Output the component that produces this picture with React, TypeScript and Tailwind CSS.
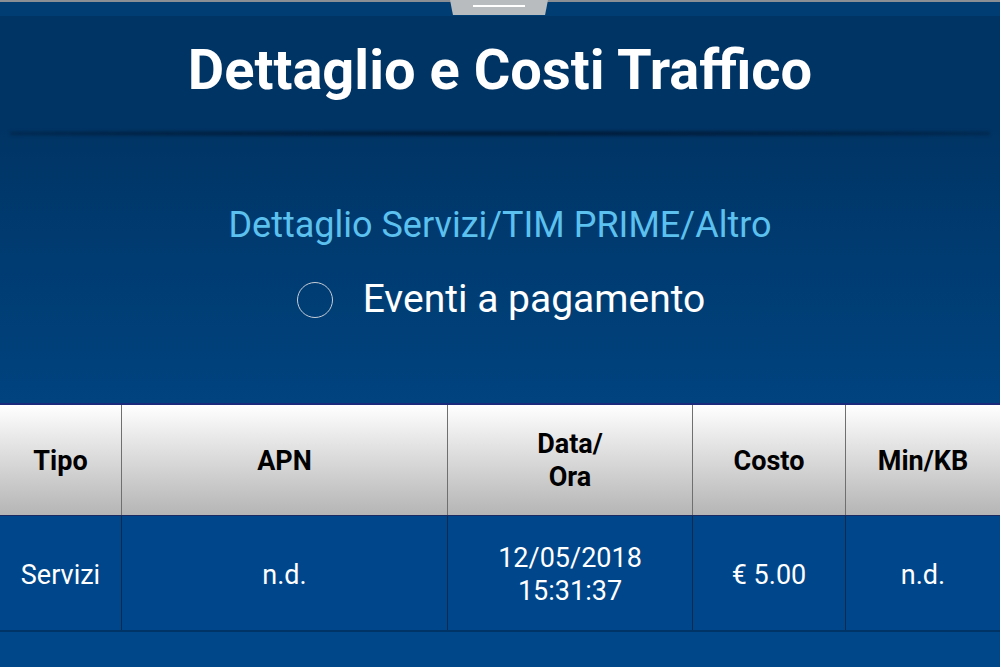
import React from "react";

export default function App() {
  const cols = ["w-[122px]", "w-[326px]", "w-[245px]", "w-[153px]", "flex-1"];
  return (
    <div className="w-[1000px] h-[667px] overflow-hidden bg-[#00478a] flex flex-col" style={{ fontFamily: "Roboto, 'Liberation Sans', sans-serif" }}>
      {/* top strip */}
      <div className="relative h-[16px] bg-[#003d72] border-t-2 border-[#8a8f96] shrink-0">
        <div className="absolute left-[450px] top-[-2px] w-[98px] h-[15px] bg-[#b9bcbf] [clip-path:polygon(0_0,100%_0,97%_100%,3%_100%)] flex justify-center pt-[5px] shadow-[0_2px_3px_rgba(0,0,0,0.6)]">
          <div className="w-[52px] h-[2px] bg-white" />
        </div>
      </div>
      {/* header */}
      <div className="h-[114px] bg-[#003464] flex items-center justify-center shrink-0 pb-[6px]">
        <h1 className="text-white font-bold text-[56px] leading-[60px]">Dettaglio e Costi Traffico</h1>
      </div>
      {/* shadow line */}
      <div className="h-[8px] shrink-0 bg-gradient-to-b from-[#003464] to-[#003566] relative">
        <div className="absolute left-[10px] right-[10px] top-[1px] h-[5px] blur-[1.5px] bg-[radial-gradient(ellipse_at_center,rgba(0,18,40,0.85)_0%,rgba(0,18,40,0.5)_60%,rgba(0,18,40,0)_100%)]" />
      </div>
      {/* body */}
      <div className="h-[265px] shrink-0 bg-gradient-to-b from-[#003566] to-[#00437f] flex flex-col items-center">
        <div className="mt-[67px] text-[#5cc1ee] text-[36px] leading-[40px]">Dettaglio Servizi/TIM PRIME/Altro</div>
        <div className="mt-[32px] flex items-center gap-[30px] pl-[2px]">
          <div className="w-[36px] h-[36px] rounded-full border-[1.5px] border-[#c8cdd6]" />
          <div className="text-white text-[39px] leading-[44px] pb-[2px]">Eventi a pagamento</div>
        </div>
      </div>
      <div className="h-[2px] bg-[#1b2a7a] shrink-0" />
      {/* table header */}
      <div className="h-[110px] shrink-0 flex bg-gradient-to-b from-[#ffffff] to-[#b5b5b5]">
        {["Tipo", "APN", "Data/\nOra", "Costo", "Min/KB"].map((t, i) => (
          <div key={i} className={`${cols[i]} ${i < 4 ? "border-r border-[#6f6f6f]" : ""} flex items-center justify-center text-center text-black font-bold text-[27px] leading-[33px] whitespace-pre-line pt-[2px]`}>{t}</div>
        ))}
      </div>
      <div className="h-[1px] bg-[#1b2a60] shrink-0" />
      {/* row */}
      <div className="h-[116px] shrink-0 flex bg-[#00468a] border-b-2 border-[#003466]">
        {["Servizi", "n.d.", "12/05/2018\n15:31:37", "€ 5.00", "n.d."].map((t, i) => (
          <div key={i} className={`${cols[i]} ${i < 4 ? "border-r border-[#0d2a4e]" : ""} flex items-center justify-center text-center text-white text-[27px] leading-[33px] whitespace-pre-line pt-[4px]`}>{t}</div>
        ))}
      </div>
    </div>
  );
}
